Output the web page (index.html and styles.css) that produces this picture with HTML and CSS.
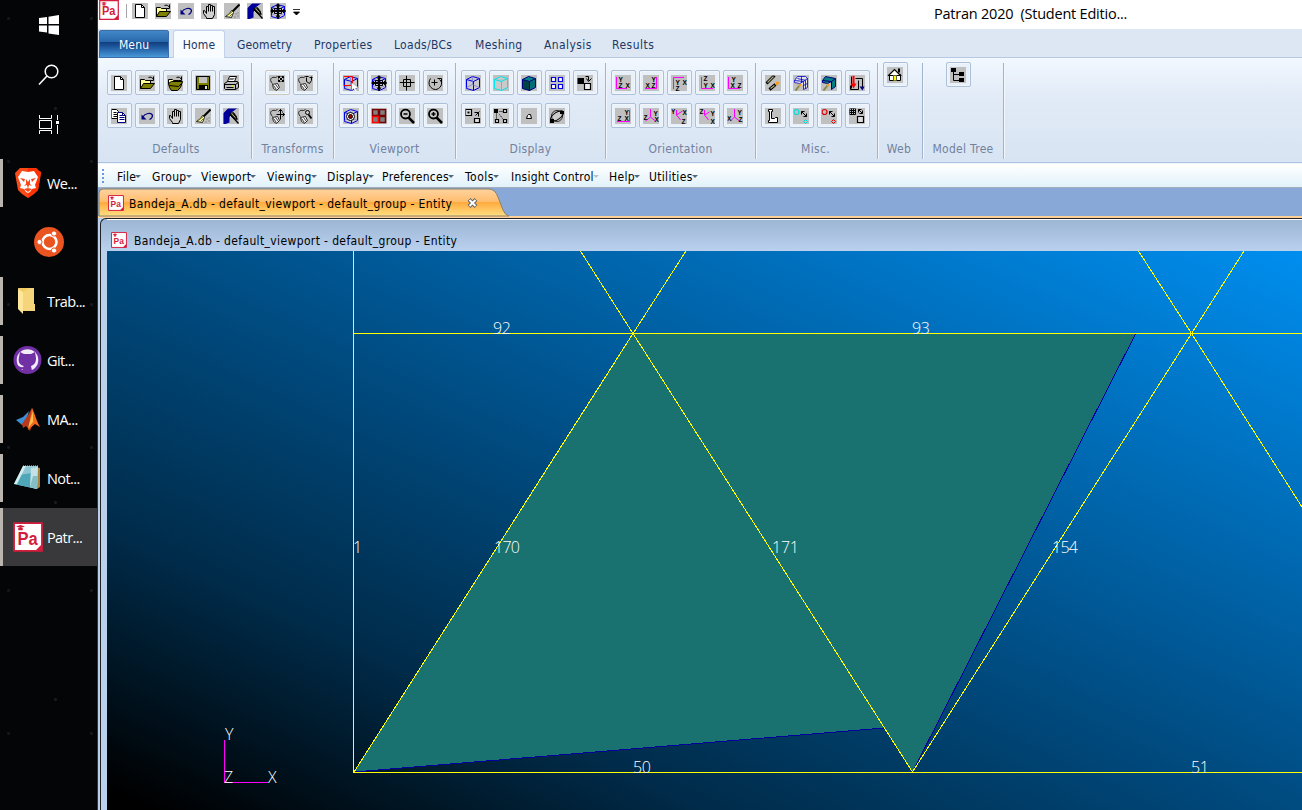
FILE: index.html
```html
<!DOCTYPE html>
<html lang="en">
<head>
<meta charset="utf-8">
<title>Patran 2020</title>
<link rel="stylesheet" href="styles.css">
</head>
<body>
<svg class="defs" width="0" height="0">
<defs>
<symbol id="new" viewBox="0 0 16 16"><path d="M3 1h6l3 3v10H3z" fill="#fff" stroke="#000"/><path d="M9 1v3h3" fill="none" stroke="#000"/></symbol>
<symbol id="open" viewBox="0 0 16 16"><path d="M1 13V4h4l1 1h5v3" fill="#ff9" stroke="#000"/><path d="M1 13l3-5h11l-4 5z" fill="#808000" stroke="#000"/><path d="M9 2c2-1 4 0 5 2m0-3v4h-3" fill="none" stroke="#000"/></symbol>
<symbol id="openall" viewBox="0 0 16 16"><path d="M1 9V4h4l1 1h5v3" fill="#ff9" stroke="#000"/><path d="M1 8l3-2h11l-2 6-3 3H4l-2-3z" fill="#808000" stroke="#000"/><path d="M2 10l9 1 3-3M9 2c2-1 4 0 5 2m0-3v4h-3" fill="none" stroke="#000"/></symbol>
<symbol id="save" viewBox="0 0 16 16"><path d="M1 1h13v13H1z" fill="#808000" stroke="#000"/><path d="M3.500 1.500h8v6h-8z" fill="#c0c0c0"/><path d="M3.500 9.500h9v5h-9z" fill="#000"/><path d="M9.500 10.500h2v3h-2z" fill="#ddd"/></symbol>
<symbol id="print" viewBox="0 0 16 16"><path d="M4 6l2-5h7l-2 5z" fill="#fff" stroke="#000"/><path d="M1 8l3-2h10l1 2v4l-3 2H2l-1-1z" fill="#bbb" stroke="#000"/><path d="M6 3h5M5 4h5" stroke="#777"/><path d="M1 9h11l3-2M12 9v5M3 12h7" fill="none" stroke="#000"/><path d="M8 10.500h2" stroke="#ff0"/></symbol>
<symbol id="copy" viewBox="0 0 16 16"><path d="M0 1h5l2 2v7H0z" fill="#fff" stroke="#000"/><path d="M2 4h3M2 6h4M2 8h4" stroke="#000"/><path d="M6 4h5l3 3v7H6z" fill="#fff" stroke="#000080"/><path d="M8 7h3M8 9h5M8 11h5M11 4v3h3" fill="none" stroke="#000080"/></symbol>
<symbol id="undo" viewBox="0 0 16 16"><path d="M3 9c2-4 9-6 10-2 0 2-1 3-3 4" fill="none" stroke="#000080" stroke-width="1.200"/><path d="M2 6v5h5z" fill="#000080"/></symbol>
<symbol id="hand" viewBox="0 0 16 16"><path d="M5 14l-3-4V7h1l2 3V3h2V1h2v1h2v1h2v8l-2 4H5z" fill="#fff" fill-opacity=".25" stroke="#000"/><path d="M7 3v5M9 2v6M11 3v5" stroke="#000"/></symbol>
<symbol id="broom" viewBox="0 0 16 16"><path d="M15 1L8 8" stroke="#000" stroke-width="2"/><path d="M7 7l2 2-2 5-6-1 4-3z" fill="#ffc" stroke="#000" stroke-width=".8"/><path d="M3 12l5-4M5 13l3-3" stroke="#808000"/><path d="M11 10h1v1h-1zM13 12h1v1h-1zM10 13h1v1h-1zM13 9h1v1h-1z" fill="#fff" stroke="#777" stroke-width=".5"/></symbol>
<symbol id="paint" viewBox="0 0 16 16"><path d="M-.5 5L5-.5h9L8 4 6 9v5l-4 1.500h-2.500z" fill="#00009c"/><path d="M6 5l4-1 3 4v3l-3-1-4-4z" fill="#444" stroke="#000" stroke-width=".8"/><path d="M6 5l9 10M10 5l4 6" stroke="#000" stroke-width="1.300"/><path d="M8 5l4 4" stroke="#aa6"/></symbol>
<symbol id="cube" viewBox="0 0 16 16"><path d="M1 4l6-3 7 2v9l-6 3-7-2zM1 4l7 2 6-3M8 6v9" fill="#ddd" fill-opacity=".35" stroke="currentColor"/></symbol>
<symbol id="wire" viewBox="0 0 16 16"><g color="#0000e6"><use href="#cube"/></g><path d="M1 12l6-3 7 3M7 1v8" fill="none" stroke="#77d" stroke-width=".7"/></symbol>
<symbol id="cyan" viewBox="0 0 16 16"><g color="#00e5ee"><use href="#cube"/></g></symbol>
<symbol id="solid" viewBox="0 0 16 16"><path d="M1 4l6-3 7 2v9l-6 3-7-2z" fill="#007078"/><path d="M1 4l6-3 7 2-6 3z" fill="#088"/><path d="M1 4l7 2v9l-7-2z" fill="#044"/><path d="M1 4l6-3 7 2v9l-6 3-7-2zM1 4l7 2 6-3M8 6v9" fill="none" stroke="#000080"/></symbol>
<symbol id="select" viewBox="0 0 16 16"><use href="#wire"/><path d="M0 1h9v9H0z" fill="none" stroke="red"/><path d="M8 7l7 5-3 1 2 3-2 1-2-4-2 2z" fill="#fff" stroke="#777" stroke-width=".4"/></symbol>
<symbol id="fit" viewBox="0 0 16 16"><use href="#wire"/><path d="M0 7.500h15M7.500 0v15" stroke="#000" stroke-width="2"/><path d="M4 5h7v5H4z" fill="none" stroke="#000"/><path d="M-.5 7.500l3-2.500v5zM15.500 7.500l-3-2.500v5zM7.500-.5L5 3h5zM7.500 15.500L5 12h5z"/></symbol>
<symbol id="center" viewBox="0 0 16 16"><path d="M0 7h15M7 0v15M4 4h7v7H4z" fill="none" stroke="#000"/></symbol>
<symbol id="rotate" viewBox="0 0 16 16"><path d="M3 3C-1 9 4 14 8 14s9-6 4-10M10 3h4v4M7 4v6M4 7h6" fill="none" stroke="#000"/></symbol>
<symbol id="target" viewBox="0 0 16 16"><use href="#wire"/><circle cx="7" cy="8" r="4" fill="#fff" stroke="#000"/><circle cx="7" cy="8" r="2" fill="#a00" stroke="#000"/></symbol>
<symbol id="panes" viewBox="0 0 16 16"><path d="M1 1h6v6H1zM8 1h6v6H8zM8 8h6v6H8z" fill="#808080" stroke="#700" stroke-width="1.500"/><path d="M1 8h6v6H1z" fill="#808080" stroke="red" stroke-width="1.500"/></symbol>
<symbol id="lens" viewBox="0 0 16 16"><circle cx="6" cy="5.500" r="4.500" fill="#c8c8c8" stroke="#000" stroke-width="1.800"/><path d="M9 9l5.500 5.500" stroke="#000" stroke-width="2.500"/><path d="M4 5.500h4" stroke="#000" stroke-width="1.500"/></symbol>
<symbol id="lensplus" viewBox="0 0 16 16"><use href="#lens"/><path d="M6 3.500v4" stroke="#000" stroke-width="1.500"/></symbol>
<symbol id="four" viewBox="0 0 16 16"><path d="M2 2h4v4H2zM9 2h4v4H9zM2 9h4v4H2zM9 9h4v4H9z" fill="#fff" stroke="#0000e6" stroke-width="1.200"/></symbol>
<symbol id="swap" viewBox="0 0 16 16"><path d="M-.5 2.500h7v6h-7z"/><path d="M7 8h6v6H7z" fill="#eee" stroke="#000" stroke-width="1.200"/><path d="M8 1h3v4m-2-2l2 3 3-3" fill="none" stroke="#000"/></symbol>
<symbol id="shrink" viewBox="0 0 16 16"><path d="M0 1h6v6H0zM9 10h5v4H9z" fill="#ddd" stroke="#000" stroke-width="1.200"/><path d="M2 3h2v2H2z"/><path d="M9 4h4v4M10 7l4-4" fill="none" stroke="#000"/></symbol>
<symbol id="nodes" viewBox="0 0 16 16"><path d="M.500.500h4v4h-4z"/><path d="M10 1h3v3h-3zM2 11h3v3H2zM10 11h3v3h-3z" fill="#ddd" stroke="#000" stroke-width="1.200"/><path d="M6 3h3M3 5v5M6 6l3 4" stroke="#000" stroke-dasharray="1 1"/></symbol>
<symbol id="small" viewBox="0 0 16 16"><path d="M5 10l1-3 1-1h2l1 4z" fill="#eee" stroke="#000"/></symbol>
<symbol id="orbit" viewBox="0 0 16 16"><circle cx="7.500" cy="7.500" r="5.500" fill="#ccc" stroke="#000" stroke-width=".8"/><ellipse cx="7.500" cy="7.500" rx="7.500" ry="3.500" fill="none" stroke="#000" transform="rotate(-35 7.500 7.500)"/><path d="M.500 10.500h4v4h-4zM10.500 2.500h4v3h-4z"/></symbol>
<symbol id="mouse" viewBox="0 0 16 16"><path d="M3 9l5-1 2 4-3 3-3-2z" fill="#fff" stroke="#000" stroke-width=".8"/><path d="M3 8C-1 4 2 1 6 2l2-1M4 10l3 4M6 9l3 4" fill="none" stroke="#000" stroke-width=".8"/></symbol>
<symbol id="mouse1" viewBox="0 0 16 16"><use href="#mouse"/><path d="M9 1l5 5M14 1L9 6M9 3V1h2M12 1h2v2M9 4v2h2M12 6h2V4" fill="none" stroke="#000"/></symbol>
<symbol id="mouse2" viewBox="0 0 16 16"><use href="#mouse"/><path d="M9 2v4l3 2 2-3V1M8 1h3M12 2h3" fill="none" stroke="#000"/></symbol>
<symbol id="mouse3" viewBox="0 0 16 16"><use href="#mouse"/><path d="M11 1v10M7 6h8M9 3l2-2 2 2M13 4l2 2-2 2" fill="none" stroke="#000"/></symbol>
<symbol id="mouse4" viewBox="0 0 16 16"><use href="#mouse"/><circle cx="10" cy="4" r="2" fill="#ccc" stroke="#000"/><path d="M11 6l3 4" stroke="#000" stroke-width="1.800"/></symbol>
<symbol id="o1" viewBox="0 0 16 16"><path d="M1.500 2v11.500H12" class="ax"/><text x="3" y="6">Y</text><text x="3" y="12">Z</text><text x="10" y="12">X</text></symbol>
<symbol id="o2" viewBox="0 0 16 16"><path d="M13.500 2v11.500H2" class="ax"/><text x="8" y="6">Y</text><text x="8" y="12">Z</text><text x="2" y="12">X</text></symbol>
<symbol id="o3" viewBox="0 0 16 16"><path d="M2.500 14V2.500H13" class="ax"/><text x="4" y="9">Y</text><text x="4" y="15">Z</text><text x="11" y="9">X</text></symbol>
<symbol id="o4" viewBox="0 0 16 16"><path d="M2.500 2v11.500H14" class="ax"/><text x="4" y="5">Z</text><text x="4" y="12">Y</text><text x="11" y="12">X</text></symbol>
<symbol id="o5" viewBox="0 0 16 16"><path d="M1.500 2v11.500H13" class="ax"/><text x="4" y="6">Y</text><text x="3" y="12">X</text><text x="10" y="12">Z</text></symbol>
<symbol id="o6" viewBox="0 0 16 16"><path d="M14.500 2v11.500H2" class="ax"/><text x="9" y="6">Y</text><text x="2" y="12">Z</text><text x="9" y="12">X</text></symbol>
<symbol id="o7" viewBox="0 0 16 16"><path d="M7.500 1v8l-5 4M7.500 9l5 4" class="ax"/><text x="0" y="11">Z</text><text x="10" y="7">Y</text><text x="11" y="13">X</text></symbol>
<symbol id="o8" viewBox="0 0 16 16"><path d="M5.500 2v5l4 5M5.500 7l6-4" class="ax"/><text x="-.5" y="5">Y</text><text x="11" y="6">X</text><text x="10" y="15">Z</text></symbol>
<symbol id="o9" viewBox="0 0 16 16"><path d="M5.500 2v5l4 5M5.500 7l5-3" class="ax"/><text x="0" y="5">Z</text><text x="11" y="7">Y</text><text x="11" y="15">X</text></symbol>
<symbol id="o10" viewBox="0 0 16 16"><path d="M7.500 1v8l-4 4M7.500 9l5 4" class="ax"/><text x="-.5" y="12">X</text><text x="10" y="6">Y</text><text x="11" y="13">Z</text></symbol>
<symbol id="pens" viewBox="0 0 16 16"><path d="M1 8l8-8M4 14l6-5" stroke="#000" stroke-width="3"/><path d="M2 7l6-6M5 13l4-3" stroke="#aa7" stroke-width="1.300"/><path d="M10 9l1-3 3 1-2 3z" fill="#f90"/></symbol>
<symbol id="dcube" viewBox="0 0 16 16"><path d="M1 5l3-4h8l2 2v9l-4 2V6L6 8 1 7zM1 5l9 1 4-3M4 3l8 2v8M8 1v6M10 10l4-2" fill="#fff" fill-opacity=".6" stroke="#0000d0" stroke-width=".8"/><path d="M2 15l4-5" stroke="#884" stroke-width="2"/><path d="M5 8l3 1-2 3z" fill="#f90"/></symbol>
<symbol id="dsolid" viewBox="0 0 16 16"><path d="M1 5l3-4 10 2v8l-4 3V6L6 8 1 7z" fill="#008080" stroke="#000080"/><path d="M1 5l9 1 4-3" fill="none" stroke="#000080"/><path d="M2 15l4-5" stroke="#884" stroke-width="2"/><path d="M5 8l3 1-2 3z" fill="#f90"/></symbol>
<symbol id="loads" viewBox="0 0 16 16"><path d="M2 1v12M6 3h7v10M1 10v4h8V5" fill="none" stroke="#000"/><path d="M4 0v9" stroke="red" stroke-width="2"/><path d="M1 8h6l-3 5z" fill="red"/><path d="M10 11h5l-2 4z" fill="#000080"/></symbol>
<symbol id="beam" viewBox="0 0 16 16"><path d="M3 1h4v2H6v7h3l1-1h2v5H3v-2h1V3H3z" fill="#fff" stroke="#000"/></symbol>
<symbol id="circ" viewBox="0 0 16 16"><circle cx="3" cy="3.500" r="2.500" fill="none" stroke="currentColor" stroke-width="1.200"/><path d="M8 3l5 5M8 6V3h3M10 8h3V5" fill="none" stroke="#000"/><path d="M12 11l2 2-2 2-2-2z" fill="none" stroke="currentColor"/></symbol>
<symbol id="circa" viewBox="0 0 16 16"><g color="#0dd"><use href="#circ"/></g></symbol>
<symbol id="circb" viewBox="0 0 16 16"><g color="#d00"><use href="#circ"/></g></symbol>
<symbol id="gridsw" viewBox="0 0 16 16"><path d="M0 0h6v6H0zM2 0v6M4 0v6M0 2h6M0 4h6" fill="none" stroke="#000"/><path d="M8 8h6v6H8z" fill="#ddd" stroke="#000" stroke-width="1.200"/><path d="M9 1l4 4M9 4V1h3M10 5h3V2" fill="none" stroke="#000"/></symbol>
<symbol id="house" viewBox="0 0 16 16"><path d="M2 7h11v6H2z" fill="#fff" stroke="#000"/><path d="M1 8l6-6 6 6z" fill="#fff" stroke="#000" stroke-width="1.200"/><path d="M11.500 1v4" stroke="#000" stroke-width="2"/><path d="M6 13V8h3v5" fill="#ff0" stroke="#664"/></symbol>
<symbol id="tree" viewBox="0 0 16 16"><path d="M.500.500h5v4h-5zM8.500 4.500h5v4h-5zM8.500 10.500h5v4h-5z"/><path d="M3 4v9h6M3 7h6" fill="none" stroke="#000"/></symbol>
<symbol id="pa" viewBox="0 0 20 20"><path d="M.7.7h18.600v18.600H.7z" fill="#fff" stroke="#d41c3c" stroke-width="1.200"/><path d="M15 19h4v-4zM2 3l3-1 3 1-3 1zM3.500 4h3v1.500h-3z" fill="#d41c3c"/><text x="3" y="15" class="patext" textLength="13.500" lengthAdjust="spacingAndGlyphs">Pa</text></symbol>
</defs>
</svg>
<div class="screen">
<aside class="dock">
  <div class="sys"><svg width="22" height="22" viewBox="0 0 22 22"><path d="M1 4l8-1v7H1zM10.500 2.800L21 1v9H10.500zM1 11.500h8v7l-8-1zM10.500 11.500H21V21l-10.500-1.500z" fill="#fff"/></svg></div>
  <div class="sys"><svg width="22" height="22" viewBox="0 0 22 22"><circle cx="13.500" cy="7.500" r="6.300" fill="none" stroke="#fff" stroke-width="1.500"/><path d="M9 12l-8 8.500" stroke="#fff" stroke-width="1.600"/></svg></div>
  <div class="sys"><svg width="22" height="22" viewBox="0 0 22 22" fill="none" stroke="#fff" stroke-width="1"><path d="M1.500 1v3.500h12V1M1.500 20v-3.500h12V20M1.500 6.500h12v8h-12zM19.500 1v5M19.500 11v9"/><path d="M18 7h3v3h-3z" fill="#fff" stroke="none"/></svg></div>
  <div class="task open">
    <svg class="app" width="30" height="32" viewBox="0 0 30 32"><path d="M7 1h16l3 3 2 1-1 7-2 11-4 4-6 4-6-4-4-4L3 12 2 6l2-2z" fill="#fa4a18"/><path d="M15 1h8l3 3 2 1-1 7-2 11-10 8z" fill="#ff3200"/><path d="M15 5l6-1 4 6-3 8 1 3-4 1-2 3-2 1-2-1-2-3-4-1 1-3-3-8 4-6z" fill="#fff"/><path d="M7 11l5 1-1 3zM23 11l-5 1 1 3zM13 12l2 3 2-3v5l2 2-3-1-1 4-1-4-3 1 2-2zM11 22l4-1 4 1-4 3z" fill="#fa4618"/></svg><span>We...</span></div>
  <div class="task solo">
    <svg class="app" width="30" height="30" viewBox="0 0 30 30"><circle cx="15" cy="15" r="15" fill="#e95420"/><circle cx="15.500" cy="15" r="7" fill="none" stroke="#fff" stroke-width="2.600"/><g fill="#fff" stroke="#e95420"><circle cx="5.500" cy="15" r="2.600"/><circle cx="20" cy="6.500" r="2.600"/><circle cx="20" cy="23.500" r="2.600"/></g></svg></div>
  <div class="task open">
    <svg class="app" width="30" height="32" viewBox="0 0 30 32"><path d="M5 3h16v16h1v7H10z" fill="#f0cc62"/><path d="M5 4l5 3v22l-5-5z" fill="#ffe69b"/><path d="M10 7l6-4h5v16h1v7H10z" fill="#f6d57a"/></svg><span>Trab...</span></div>
  <div class="task open">
    <svg class="app" width="30" height="30" viewBox="0 0 30 30"><circle cx="14.500" cy="15" r="14" fill="#7130a4"/><circle cx="14.500" cy="15" r="10.800" fill="#f2edf7"/><path d="M7 7l4 2h7l4-2 1 6c0 5-2 7-5 8l1 5c-3 1-6 1-9 0v-2c-3 1-4-1-5-3 2 0 3 2 5 1l1-1c-5-1-6-5-5-9z" fill="#7130a4"/></svg><span>Git...</span></div>
  <div class="task open">
    <svg class="app" width="30" height="30" viewBox="0 0 30 30"><path d="M3 16l7-3 6-6-4 14-3 0z" fill="#3c8fd0"/><path d="M9 20l6-9 4-7 3 9-5 14-4-5-3 2z" fill="#b83a1b"/><path d="M19 4c2 3 4 12 8 19l-5-3-7 6z" fill="#f26a22"/><path d="M20 7l-5 17 5-6z" fill="#ffc04a"/></svg><span>MA...</span></div>
  <div class="task open">
    <svg class="app" width="30" height="30" viewBox="0 0 30 30"><path d="M23 4l4 1v19l-3 2z" fill="#a78342"/><path d="M10 3h15l-1 23L1 21z" fill="#8cc6d2"/><path d="M6 12l19-3-1 17L1 21z" fill="#4da7b8"/><path d="M10 3L1 21l3 0 9-18z" fill="#d6edf0"/><path d="M18 5l7-1-1 22-7-2z" fill="#c4e2e5"/><path d="M20 13h5l-1 13-7-2z" fill="#86bec6"/><path d="M10 3h15" stroke="#ddd" stroke-dasharray="1 1"/></svg><span>Not...</span></div>
  <div class="task open active"><svg class="app" width="30" height="30"><use href="#pa"/></svg><span>Patr...</span></div>
</aside>
<main class="window">
  <header class="titlebar">
    <svg class="logo" width="20" height="20"><use href="#pa"/></svg><i class="sep"></i>
    <div class="quick">
      <svg class="ico"><use href="#new"/></svg><svg class="ico"><use href="#open"/></svg><svg class="ico"><use href="#undo"/></svg><svg class="ico"><use href="#hand"/></svg><svg class="ico"><use href="#broom"/></svg><svg class="ico"><use href="#paint"/></svg><svg class="ico"><use href="#fit"/></svg>
    </div>
    <svg class="more" width="8" height="8"><path d="M0 1.500h7M.5 4h6L3.500 7z" stroke="#000" stroke-width=".8"/></svg>
    <h1>Patran 2020&nbsp; (Student Editio...</h1>
  </header>
  <nav class="tabs"><b class="menu">Menu</b><b class="home">Home</b><span class="w80">Geometry</span><span class="w77">Properties</span><span class="w84">Loads/BCs</span><span class="w66">Meshing</span><span class="w71">Analysis</span><span class="w60">Results</span></nav>
  <section class="ribbon">
    <div class="group g1"><div class="btns c5">
      <button><svg class="ico"><use href="#new"/></svg></button><button><svg class="ico"><use href="#open"/></svg></button><button><svg class="ico"><use href="#openall"/></svg></button><button><svg class="ico"><use href="#save"/></svg></button><button><svg class="ico"><use href="#print"/></svg></button>
      <button><svg class="ico"><use href="#copy"/></svg></button><button><svg class="ico"><use href="#undo"/></svg></button><button><svg class="ico"><use href="#hand"/></svg></button><button><svg class="ico"><use href="#broom"/></svg></button><button><svg class="ico"><use href="#paint"/></svg></button>
    </div><p>Defaults</p></div>
    <div class="group g2"><div class="btns c2">
      <button class="hot"><svg class="ico"><use href="#mouse1"/></svg></button><button><svg class="ico"><use href="#mouse2"/></svg></button><button><svg class="ico"><use href="#mouse3"/></svg></button><button><svg class="ico"><use href="#mouse4"/></svg></button>
    </div><p>Transforms</p></div>
    <div class="group g3"><div class="btns c4">
      <button><svg class="ico"><use href="#select"/></svg></button><button><svg class="ico"><use href="#fit"/></svg></button><button><svg class="ico"><use href="#center"/></svg></button><button><svg class="ico"><use href="#rotate"/></svg></button>
      <button><svg class="ico"><use href="#target"/></svg></button><button><svg class="ico"><use href="#panes"/></svg></button><button><svg class="ico"><use href="#lens"/></svg></button><button><svg class="ico"><use href="#lensplus"/></svg></button>
    </div><p>Viewport</p></div>
    <div class="group g4"><div class="btns c5">
      <button><svg class="ico"><use href="#wire"/></svg></button><button><svg class="ico"><use href="#cyan"/></svg></button><button><svg class="ico"><use href="#solid"/></svg></button><button><svg class="ico"><use href="#four"/></svg></button><button><svg class="ico"><use href="#swap"/></svg></button>
      <button><svg class="ico"><use href="#shrink"/></svg></button><button><svg class="ico"><use href="#nodes"/></svg></button><button><svg class="ico"><use href="#small"/></svg></button><button><svg class="ico"><use href="#orbit"/></svg></button>
    </div><p>Display</p></div>
    <div class="group g5"><div class="btns c5">
      <button><svg class="ico"><use href="#o1"/></svg></button><button><svg class="ico"><use href="#o2"/></svg></button><button><svg class="ico"><use href="#o3"/></svg></button><button><svg class="ico"><use href="#o4"/></svg></button><button><svg class="ico"><use href="#o5"/></svg></button>
      <button><svg class="ico"><use href="#o6"/></svg></button><button><svg class="ico"><use href="#o7"/></svg></button><button><svg class="ico"><use href="#o8"/></svg></button><button><svg class="ico"><use href="#o9"/></svg></button><button><svg class="ico"><use href="#o10"/></svg></button>
    </div><p>Orientation</p></div>
    <div class="group g6"><div class="btns c4">
      <button><svg class="ico"><use href="#pens"/></svg></button><button><svg class="ico"><use href="#dcube"/></svg></button><button><svg class="ico"><use href="#dsolid"/></svg></button><button><svg class="ico"><use href="#loads"/></svg></button>
      <button><svg class="ico"><use href="#beam"/></svg></button><button><svg class="ico"><use href="#circa"/></svg></button><button><svg class="ico"><use href="#circb"/></svg></button><button><svg class="ico"><use href="#gridsw"/></svg></button>
    </div><p>Misc.</p></div>
    <div class="group g7"><div class="btns c1"><button><svg class="ico"><use href="#house"/></svg></button></div><p>Web</p></div>
    <div class="group g8"><div class="btns c1"><button><svg class="ico"><use href="#tree"/></svg></button></div><p>Model Tree</p></div>
  </section>
  <nav class="menubar"><i class="grip"></i><span class="m1">File</span><span class="m2">Group</span><span class="m3">Viewport</span><span class="m4">Viewing</span><span class="m5">Display</span><span class="m6">Preferences</span><span class="m7">Tools</span><span class="m8 dim">Insight Control</span><span class="m9">Help</span><span class="m10">Utilities</span></nav>
  <div class="doctabs">
    <svg class="tabshape" width="412" height="30" viewBox="0 0 412 30"><defs><linearGradient id="tabfill" x2="0" y2="1"><stop offset="0" stop-color="#ffd3a0"/><stop offset=".48" stop-color="#ffbd6c"/><stop offset=".5" stop-color="#ffab3d"/><stop offset="1" stop-color="#ffdf83"/></linearGradient></defs><path d="M1 28V5q0-4 4-4H391q6 0 9 8l5 13q2 5 6 6z" fill="url(#tabfill)" stroke="#8c8068"/></svg>
    <div class="doctab"><svg width="16" height="16"><use href="#pa"/></svg><span>Bandeja_A.db - default_viewport - default_group - Entity</span><svg class="close" width="11" height="10" viewBox="0 0 11 10"><path d="M2 1.500l7 7M9 1.500l-7 7" stroke="#666" stroke-width="4"/><path d="M2.500 2l6 6M8.500 2l-6 6" stroke="#fff" stroke-width="2"/></svg></div>
  </div>
  <section class="child">
    <div class="childtitle"><svg width="16" height="16"><use href="#pa"/></svg><span>Bandeja_A.db - default_viewport - default_group - Entity</span></div>
    <div class="canvas">
      <svg class="model" width="1195" height="559" viewBox="107 251 1195 559">
        <path d="M633 333.500H1135.500L912.500 772 884 728 354 772z" fill="#19726f"/>
        <path d="M1135.500 334L912.500 772M354 772L884 728" stroke="#00009c" fill="none"/>
        <path d="M353.500 251V772M353 333.500H1302M353 772.500H1302M354 772L633 333.500 686 251M580.500 251L633 333.500 912.500 772 1191.500 333.500 1244 251M1138.500 251L1191.500 333.500 1302 507" stroke="#ff0" fill="none"/>
        <path d="M224.500 740V782.500H268" stroke="#f0f" fill="none"/>
        <g class="num"><text x="493" y="334" textLength="18">92</text><text x="912" y="334" textLength="18">93</text><text x="353" y="553">1</text><text x="494" y="553" textLength="26">170</text><text x="772" y="553" textLength="27">171</text><text x="1052" y="553" textLength="26">154</text><text x="633" y="773" textLength="18">50</text><text x="1191" y="773" textLength="18">51</text><text x="225" y="740">Y</text><text x="224" y="783">Z</text><text x="268" y="783">X</text></g>
      </svg>
    </div>
  </section>
</main>
</div>
</body>
</html>
```
FILE: styles.css
```css
* { box-sizing: border-box; }
body { margin: 0; width: 1302px; height: 810px; overflow: hidden; font: 12px "DejaVu Sans Condensed", "Noto Sans", sans-serif; }
.defs { position: absolute; }
.screen { display: flex; height: 810px; }
.dock { width: 98px; flex: none; background: radial-gradient(circle, #1b1c20 0 1px, transparent 2px) 20px 10px / 71px 197px, radial-gradient(circle, #17181b 0 1px, transparent 2px) 50px 90px / 83px 143px, #040507; border-right: 1px solid #333; padding-top: 14px; color: #fff; font: 14.500px "Open Sans", "Noto Sans", sans-serif; }
.sys { height: 50px; padding-left: 38px; }
.sys svg { display: block; }
.sys:nth-child(3) { height: 44px; }
.task { height: 58px; margin-bottom: 1px; display: flex; align-items: center; padding-left: 13px; background: linear-gradient(#bab5af, #bab5af) 0 5px / 3px 48px no-repeat; }
.task:nth-child(4) { height: 50px; margin-bottom: 5px; background-position: 0 1px; }
.task.solo { padding-left: 34px; background: none; }
.task span { width: 50px; margin-left: 4px; letter-spacing: -.6px; white-space: nowrap; }
.task.active { background: linear-gradient(#bab5af, #bab5af) 0 0 / 3px 58px no-repeat, #39393b; }
.app { flex: none; }
.window { width: 1204px; display: flex; flex-direction: column; background: #bad1ee; }
.titlebar { height: 29px; flex: none; background: #fff; display: flex; align-items: flex-start; padding-left: 1px; }
.titlebar h1 { margin: 4px 0 0 633px; font: 14.500px/20px "Open Sans", "Noto Sans", sans-serif; letter-spacing: -.22px; white-space: nowrap; }
.sep { width: 1px; height: 14px; margin: 4px 5px 0 7px; background: #a5a5a5; }
.quick { display: flex; gap: 7px; margin-top: 3px; }
.ico { display: block; width: 16px; height: 16px; background: #c0c0c0; }
.ico > use { transform: translate(.5px, .5px); }
.ax { fill: none; stroke: #f0f; transform: translate(-.5px, -.5px); }
symbol text { font: bold 6.500px "Liberation Sans", sans-serif; fill: #000; }
symbol .patext { font: bold 12px "Liberation Sans", sans-serif; fill: #d41c3c; }
.more { margin: 8px 0 0 7px; }
.tabs { height: 29px; flex: none; background: #dde7f3; border-bottom: 1px solid #b5c9e3; display: flex; color: #203864; line-height: 32px; padding-left: 1px; letter-spacing: .15px; }
.tabs b { font-weight: normal; text-align: center; }
.menu { width: 70px; height: 28px; margin: 1px 5px 0 0; line-height: 28px; color: #fff; border: 1px solid #3c6da7; background: linear-gradient(#4388c8, #2868ac 42%, #113f80 44%, #1d559b 60%, #4898d8); border-radius: 2px 2px 0 0; }
.home { width: 52px; height: 29px; margin: 1px 12px 0 -1px; line-height: 28px; border: 1px solid #c1d2e9; border-bottom: 0; background: #f8fcff; border-radius: 3px 3px 0 0; }
.w80 { width: 77px; } .w77 { width: 80px; letter-spacing: .4px; } .w84 { width: 81px; letter-spacing: .3px; } .w66 { width: 69px; letter-spacing: .35px; } .w71 { width: 68px; letter-spacing: .4px; } .w60 { width: 60px; letter-spacing: .5px; }
.tabs span { white-space: nowrap; }
.ribbon { height: 105px; flex: none; display: flex; background: linear-gradient(#f2f8ff, #e2ebf7 35%, #d8e4f3); padding-top: 5px; border-bottom: 1px solid #adc3e2; }
.group { height: 96px; padding-top: 7px; border-right: 1px solid #a2b5cf; box-shadow: 1px 0 #f1f6fc; display: flex; flex-direction: column; flex: none; }
.group p { margin: auto 0 2px; line-height: 16px; color: #71829e; letter-spacing: .3px; text-align: center; white-space: nowrap; }
.btns { display: grid; gap: 8px 3px; padding-left: 5px; }
.c1 { grid-template-columns: 25px; } .c2 { grid-template-columns: repeat(2, 25px); } .c4 { grid-template-columns: repeat(4, 25px); } .c5 { grid-template-columns: repeat(5, 25px); }
button { width: 25px; height: 25px; padding: 4px; border: 1px solid #aebfd8; border-radius: 2px; background: #e8f0fa; box-shadow: inset 0 0 0 1px #f1f6fc; }
button .ico { margin: 0 0 0 -1px; }
button.hot { border-color: #cac9bd; }
.g1 { width: 154px; } .g1 .btns { padding-left: 9px; } .g1 p { padding-left: 3px; }
.g2 { width: 82px; } .g2 .btns { padding-left: 13px; }
.g3 { width: 122px; } .g4 { width: 150px; } .g5 { width: 150px; } .g6 { width: 122px; } .g7 { width: 45px; } .g8 { width: 81px; }
.g7, .g8 { padding-top: 0; } .g7 .btns, .g8 .btns { margin-top: -1px; } .g8 .btns { padding-left: 23px; }
.g7 p { padding-right: 2px; } .g6 p { padding-right: 2px; }
.menubar { height: 25px; flex: none; display: flex; align-items: center; background: linear-gradient(#fff, #e1f2fa); border-top: 1px solid #eef5fc; border-bottom: 1px solid #a3adbb; padding-top: 2px; color: #000; letter-spacing: .33px; }
.grip { width: 2px; height: 15px; margin: 0 14px 0 4px; background: repeating-linear-gradient(#6c9ad7 0 2px, transparent 2px 4px); }
.menubar span { flex: none; display: flex; align-items: center; white-space: nowrap; }
.menubar span::after { content: ""; border: 3px solid transparent; border-top-color: #506780; border-bottom: 0; margin-left: -1px; }
.menubar .dim::after { border-top-color: #b5c5ce; }
.m1 { width: 35px; margin-left: -1px; } .m2 { width: 49px; } .m3 { width: 66px; } .m4 { width: 60px; } .m5 { width: 55px; } .m6 { width: 83px; } .m7 { width: 46px; letter-spacing: .5px; } .m8 { width: 98px; } .m9 { width: 40px; }
.menubar .m8 { letter-spacing: .25px; }
.doctabs { height: 30px; flex: none; display: grid; background: #88a9d7; border-bottom: 2px solid #ffd199; letter-spacing: .37px; }
.tabshape, .doctab { grid-area: 1 / 1; }
.doctab { display: flex; align-items: center; padding: 1px 0 0 10px; height: 29px; }
.doctab > span { width: 324px; margin: 1px 0 0 5px; white-space: nowrap; }
.close { margin-left: 14px; }
.tabshape { display: block; }
.child { flex: 1; border: 1px solid #222; border-width: 1px 0 0 1px; border-radius: 6px 0 0; background: linear-gradient(#9bb5d3, #bad1ee 32px); margin-left: 2px; padding-left: 6px; letter-spacing: .37px; }
.childtitle { display: flex; height: 32px; align-items: center; padding: 8px 0 0 4px; border-top: 1px solid #fff; }
.childtitle span { margin: 2px 0 0 7px; white-space: nowrap; }
.canvas { width: 1195px; height: 559px; background: linear-gradient(to top right, #000 2%, #002b49 25%, #004b80 50%, #008eef 100%); letter-spacing: 0; }
.model { display: block; shape-rendering: crispEdges; }
.num { font: 16px "Open Sans", "Noto Sans", sans-serif; font-weight: 300; fill: #fff; }
```
